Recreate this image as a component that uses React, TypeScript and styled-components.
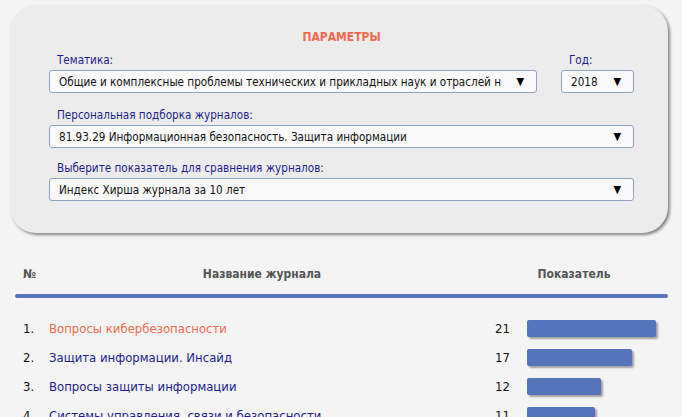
import React from 'react'
import styled, { createGlobalStyle } from 'styled-components'

const GlobalStyle = createGlobalStyle`
  html, body {
    margin: 0;
    padding: 0;
    background: #f4f4f4;
    font-family: 'DejaVu Sans Condensed', 'DejaVu Sans', sans-serif;
  }
`

type Journal = { title: string; value: number; active?: boolean }

const journals: Journal[] = [
  { title: 'Вопросы кибербезопасности', value: 21, active: true },
  { title: 'Защита информации. Инсайд', value: 17 },
  { title: 'Вопросы защиты информации', value: 12 },
  { title: 'Системы управления, связи и безопасности', value: 11 },
]

// pixels per unit of the index
const UNIT = 6.15

const Select = ({ value }: { value: string }) => (
  <SelectBox>
    <SelectText>{value}</SelectText>
    <Arrow>▼</Arrow>
  </SelectBox>
)

const App = () => {
  return (
    <Page>
      <GlobalStyle />
      <Panel>
        <PanelTitle>ПАРАМЕТРЫ</PanelTitle>
        <TopRow>
          <Field>
            <Label>Тематика:</Label>
            <Select value="Общие и комплексные проблемы технических и прикладных наук и отраслей н" />
          </Field>
          <YearField>
            <Label>Год:</Label>
            <Select value="2018" />
          </YearField>
        </TopRow>
        <Field $gap={14}>
          <Label>Персональная подборка журналов:</Label>
          <Select value="81.93.29 Информационная безопасность. Защита информации" />
        </Field>
        <Field $gap={12}>
          <Label>Выберите показатель для сравнения журналов:</Label>
          <Select value="Индекс Хирша журнала за 10 лет" />
        </Field>
      </Panel>

      <Table>
        <HeadRow>
          <HeadCell>№</HeadCell>
          <HeadCell $center>Название журнала</HeadCell>
          <HeadCell />
          <HeadCell $center>Показатель</HeadCell>
        </HeadRow>
        <Rule />
        <Rows>
          {journals.map((j, i) => (
            <Row key={j.title}>
              <Num>{i + 1}.</Num>
              <Title $active={j.active}>{j.title}</Title>
              <Value>{j.value}</Value>
              <BarCell>
                <Bar style={{ width: j.value * UNIT }} />
              </BarCell>
            </Row>
          ))}
        </Rows>
      </Table>
    </Page>
  )
}

export default App

const Page = styled.div`
  width: 682px;
  height: 417px;
  overflow: hidden;
  padding: 5px 14px 0 10px;
  box-sizing: border-box;
`

const Panel = styled.div`
  background: #ececec;
  border-radius: 26px;
  box-shadow: 2px 2px 3px rgba(0, 0, 0, 0.45);
  padding: 24px 34px 32px 39px;
  display: flex;
  flex-direction: column;
`

const PanelTitle = styled.div`
  text-align: center;
  color: #f26b50;
  font-weight: bold;
  font-size: 12px;
  line-height: 16px;
  margin-bottom: 7px;
`

const TopRow = styled.div`
  display: flex;
  gap: 24px;
  align-items: flex-end;
`

const Field = styled.div<{ $gap?: number }>`
  display: flex;
  flex-direction: column;
  gap: 2px;
  flex: 1;
  min-width: 0;
  margin-top: ${({ $gap }) => $gap ?? 0}px;
`

const YearField = styled(Field)`
  flex: 0 0 73px;
`

const Label = styled.div`
  color: #1e1e8e;
  font-size: 11.6px;
  line-height: 16px;
  padding-left: 8px;
`

const SelectBox = styled.div`
  height: 23px;
  box-sizing: border-box;
  border: 1px solid #8fa3c4;
  border-radius: 3px;
  background: #fafafa;
  display: flex;
  align-items: center;
  padding: 0 12px 0 9px;
  gap: 10px;
`

const SelectText = styled.div`
  flex: 1;
  min-width: 0;
  white-space: nowrap;
  overflow: hidden;
  font-size: 11.6px;
  color: #111;
`

const Arrow = styled.span`
  font-size: 11px;
  color: #000;
`

const Table = styled.div`
  margin-top: 31px;
  margin-left: 5px;
`

const HeadRow = styled.div`
  display: grid;
  grid-template-columns: 34px 410px 40px 134px;
  padding-left: 8px;
  font-size: 12px;
  font-weight: bold;
  color: #555;
  height: 20px;
  align-items: center;
`

const HeadCell = styled.div<{ $center?: boolean }>`
  text-align: ${({ $center }) => ($center ? 'center' : 'left')};
`

const Rule = styled.div`
  height: 4px;
  margin-top: 10px;
  border-radius: 2px;
  background: #5574bc;
`

const Rows = styled.div`
  margin-top: 16px;
  display: flex;
  flex-direction: column;
`

const Row = styled.div`
  display: grid;
  grid-template-columns: 26px 425px 36px 1fr;
  padding-left: 8px;
  height: 29px;
  align-items: center;
  font-size: 13px;
`

const Num = styled.div`
  color: #111;
`

const Title = styled.div<{ $active?: boolean }>`
  color: ${({ $active }) => ($active ? '#f26b50' : '#1e1e8e')};
  white-space: nowrap;
`

const Value = styled.div`
  text-align: right;
  color: #111;
`

const BarCell = styled.div`
  padding-left: 17px;
`

const Bar = styled.div`
  height: 17px;
  border-radius: 2px;
  background: #5574bc;
  box-shadow: 2px 2px 2px rgba(0, 0, 0, 0.35);
`
